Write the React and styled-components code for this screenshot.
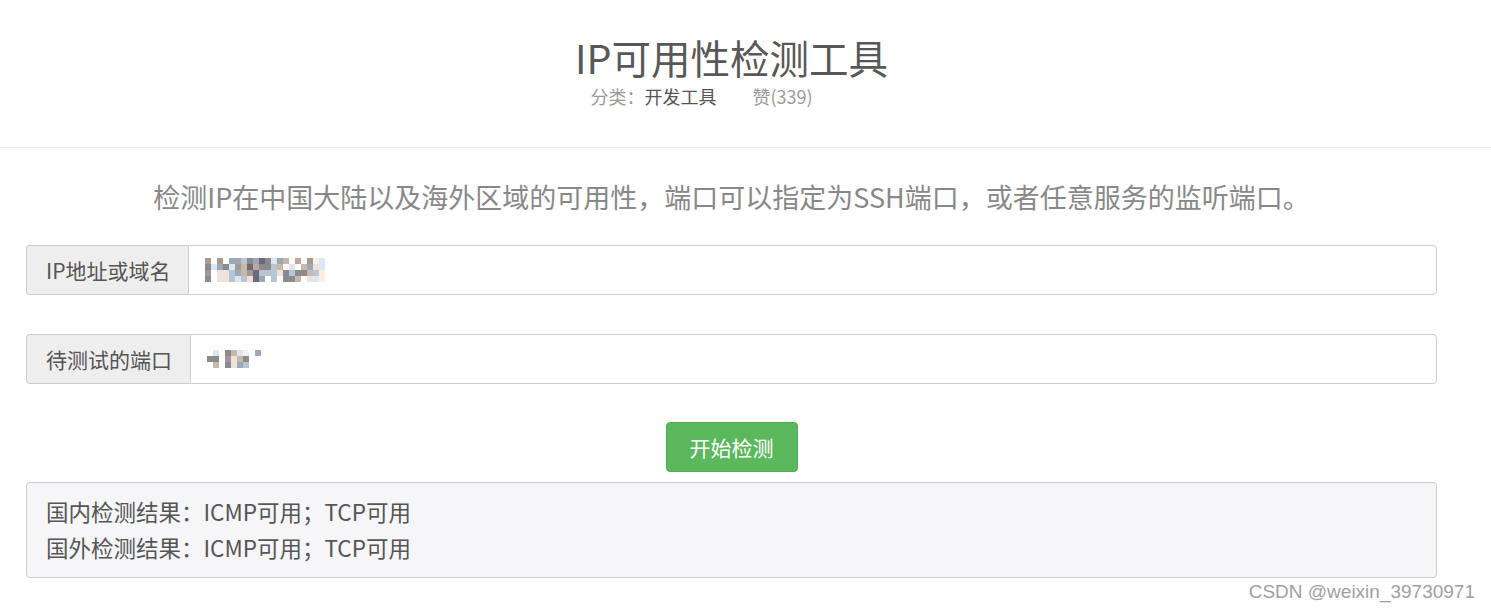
import React from "react";
import styled, { createGlobalStyle } from "styled-components";

const GlobalStyle = createGlobalStyle`
  html, body {
    margin: 0;
    padding: 0;
    background: #fff;
  }
  body {
    font-family: "Noto Sans CJK SC", "Noto Sans", sans-serif;
    color: #555;
  }
`;

const Page = styled.div`
  position: relative;
  min-height: 611px;
`;

const Header = styled.header`
  border-bottom: 1px solid #eee;
  padding: 33px 28px 38px 0;
  text-align: center;
`;

const Title = styled.h1`
  margin: 0;
  font-size: 39.5px;
  font-weight: 400;
  line-height: 48px;
  color: #585858;
`;

const Meta = styled.div`
  margin-top: 2px;
  padding-right: 60px;
  display: flex;
  justify-content: center;
  gap: 36px;
  font-size: 18px;
  line-height: 26px;
  color: #999;
`;

const MetaItem = styled.span`
  color: ${(p) => (p.$dark ? "#555" : "#999")};
`;

const Main = styled.main`
  padding: 29px 54px 0 26px;
`;

const Intro = styled.p`
  margin: 0 0 28px;
  text-align: center;
  font-size: 27px;
  line-height: 40px;
  color: #888;
`;

const Group = styled.div`
  display: flex;
  height: 50px;
  margin-bottom: ${(p) => p.$gap || 0}px;
`;

const Addon = styled.label`
  display: flex;
  align-items: center;
  box-sizing: border-box;
  padding: 0 18px 0 19px;
  background: #eee;
  border: 1px solid #ccc;
  border-right: none;
  border-radius: 4px 0 0 4px;
  font-size: 21px;
  color: #555;
  white-space: nowrap;
`;

const Field = styled.div`
  flex: 1;
  display: flex;
  align-items: center;
  box-sizing: border-box;
  padding: 0 16px;
  background: #fff;
  border: 1px solid #ccc;
  border-radius: 0 4px 4px 0;
`;

const Actions = styled.div`
  display: flex;
  justify-content: center;
  margin-top: 38px;
  margin-bottom: 10px;
`;

const Button = styled.button`
  height: 50px;
  padding: 0 23px;
  background: #5cb85c;
  border: 1px solid #4cae4c;
  border-radius: 4px;
  color: #fff;
  font-family: inherit;
  font-size: 21px;
  cursor: pointer;
`;

const Result = styled.div`
  box-sizing: border-box;
  padding: 10px 19px 12px;
  background: #f6f6f8;
  border: 1px solid #ccc;
  border-radius: 4px;
  font-size: 22.5px;
  line-height: 36px;
  color: #555;
`;

const Watermark = styled.div`
  position: absolute;
  right: 16px;
  top: 580px;
  font-family: "Liberation Sans", Arial, sans-serif;
  font-size: 19px;
  line-height: 24px;
  color: #a0a0a0;
  text-shadow: 0 0 1px #fff;
`;

const palette = {
  a: "#a89a90",
  b: "#9aa8b8",
  c: "#8c8a8c",
  d: "#c8b8a8",
  e: "#dce6f0",
  f: "#ece4dc",
  g: "#6c6a78",
  h: "#f6f2ea",
  i: "#c0a69c",
  j: "#b8c4d0",
  k: "#a0969c",
  l: "#fbeede",
};

const Mosaic = ({ rows, cell = 6 }) => (
  <svg
    width={rows[0].length * cell}
    height={rows.length * cell}
    style={{ display: "block" }}
  >
    {rows.map((row, y) =>
      row.split("").map((ch, x) =>
        palette[ch] ? (
          <rect
            key={`${x}-${y}`}
            x={x * cell}
            y={y * cell}
            width={cell}
            height={cell}
            fill={palette[ch]}
          />
        ) : null
      )
    )}
  </svg>
);

const hostCells = [
  "a.a.bbjcbgcebd.i.ahe..",
  "cebceadgiccjd.e.dbfe..",
  "k.ffjbdkgjjjfcjccdjl..",
  "c.ffjejfgb.j.ccd.fel..",
];

const portCells = [
  ".e.cdeh.b",
  "cc.kfdc..",
  ".d.cfbj..",
];

const App = () => {
  return (
    <Page>
      <GlobalStyle />
      <Header>
        <Title>IP可用性检测工具</Title>
        <Meta>
          <span>
            分类：<MetaItem $dark>开发工具</MetaItem>
          </span>
          <MetaItem>赞(339)</MetaItem>
        </Meta>
      </Header>
      <Main>
        <Intro>
          检测IP在中国大陆以及海外区域的可用性，端口可以指定为SSH端口，或者任意服务的监听端口。
        </Intro>
        <Group $gap={39}>
          <Addon>IP地址或域名</Addon>
          <Field>
            <Mosaic rows={hostCells} />
          </Field>
        </Group>
        <Group>
          <Addon>待测试的端口</Addon>
          <Field>
            <Mosaic rows={portCells} />
          </Field>
        </Group>
        <Actions>
          <Button>开始检测</Button>
        </Actions>
        <Result>
          <div>国内检测结果：ICMP可用；TCP可用</div>
          <div>国外检测结果：ICMP可用；TCP可用</div>
        </Result>
      </Main>
      <Watermark>CSDN @weixin_39730971</Watermark>
    </Page>
  );
};

export default App;
